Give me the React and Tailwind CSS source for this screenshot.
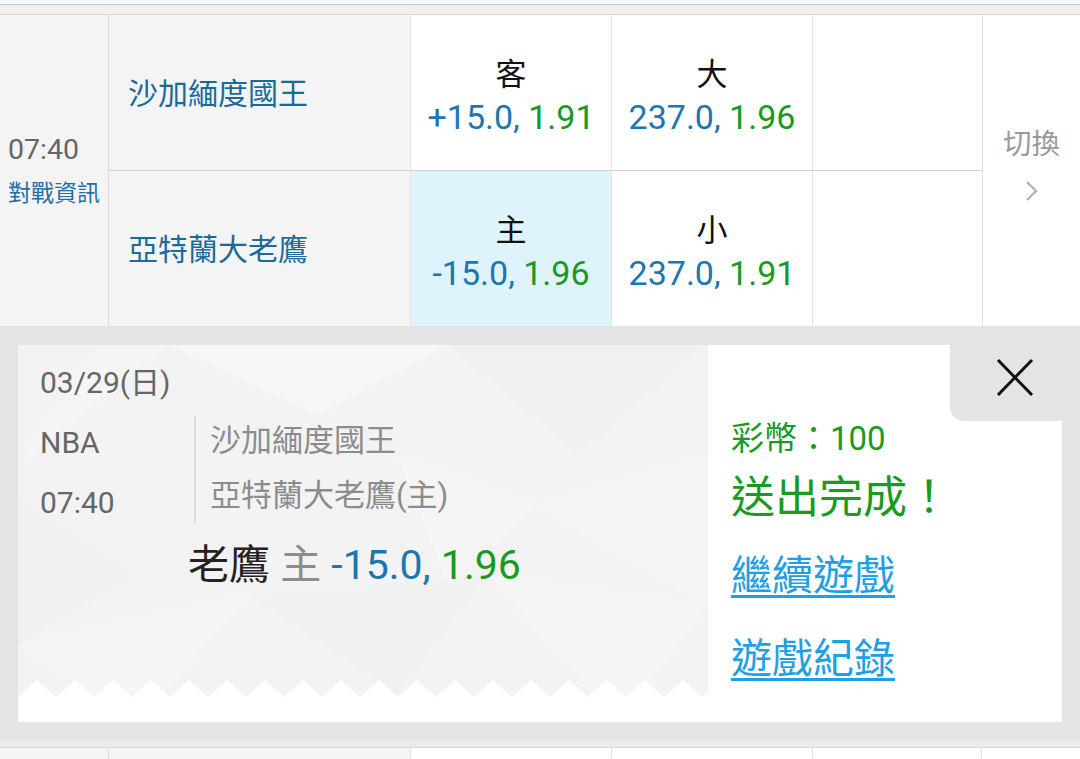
import React from "react";

const FONT = "font-['Roboto','Noto_Sans_CJK_TC',sans-serif]";

function Odds({ head, line, price, bg = "bg-white" }) {
  return (
    <div className={`w-[201px] shrink-0 ${bg} border-r border-[#dfe4e8] flex flex-col items-center justify-center pt-[6px]`}>
      <div className="text-[31px] leading-[43px] text-[#111]">{head}</div>
      <div className="text-[34px] leading-[43px] whitespace-nowrap">
        <span className="text-[#1b77b2]">{line}, </span>
        <span className="text-[#189a1e]">{price}</span>
      </div>
    </div>
  );
}

function Chevron() {
  return (
    <svg width="16" height="22" viewBox="0 0 16 22" fill="none">
      <path d="M3 2 L12 11 L3 20" stroke="#b0b0b0" strokeWidth="2.2" />
    </svg>
  );
}

function TicketBg() {
  let d = "M0,377 L0,352";
  for (let x = 0; x < 700; x += 38) {
    d += ` L${x + 19},335 L${x + 38},352`;
  }
  d += " L690,377 Z";
  return (
    <svg className="absolute inset-0" width="690" height="377" viewBox="0 0 690 377">
      <rect width="690" height="377" fill="#f3f3f3" />
      <polygon points="150,0 430,0 300,70" fill="#f6f6f6" />
      <polygon points="430,0 690,0 560,110" fill="#f1f1f1" />
      <polygon points="0,150 120,230 0,300" fill="#f1f1f1" />
      <polygon points="80,0 150,0 0,120" fill="#f5f5f5" />
      <polygon points="520,160 690,110 690,260" fill="#f5f5f5" />
      <polygon points="230,250 470,230 380,350" fill="#f1f1f1" />
      <polygon points="470,230 690,260 600,377" fill="#f5f5f5" />
      <polygon points="0,300 230,250 120,377" fill="#f5f5f5" />
      <polygon points="380,110 520,160 430,240" fill="#f5f5f5" />
      <path d={d} fill="#ffffff" />
    </svg>
  );
}

export default function App() {
  return (
    <div className={`w-[1080px] h-[759px] overflow-hidden bg-white ${FONT}`}>
      {/* top strip */}
      <div className="h-[4px] bg-[#f7f8f9]" />
      <div className="h-px bg-[#bccad6]" />
      <div className="h-[9px] bg-[#f2efec]" />
      <div className="h-px bg-[#cfd9e2]" />

      {/* match row */}
      <div className="flex h-[311px]">
        <div className="w-[109px] shrink-0 bg-[#f4f4f4] border-r border-[#dcdcdc] flex flex-col pt-[115px] pl-[8px]">
          <div className="text-[28.5px] leading-[40px] text-[#666]">07:40</div>
          <div className="text-[23px] leading-[48px] text-[#1f6fa5] whitespace-nowrap">對戰資訊</div>
        </div>
        <div className="w-[873px] shrink-0 flex flex-col">
          <div className="flex h-[156px] border-b border-[#c9d3db]">
            <div className="w-[302px] shrink-0 bg-[#f4f4f4] border-r border-[#dfe4e8] flex items-center pl-[19px] pt-[2px]">
              <span className="text-[30px] text-[#1b6a9a]">沙加緬度國王</span>
            </div>
            <Odds head="客" line="+15.0" price="1.91" />
            <Odds head="大" line="237.0" price="1.96" />
            <div className="flex-1 bg-white" />
          </div>
          <div className="flex h-[155px]">
            <div className="w-[302px] shrink-0 bg-[#f4f4f4] border-r border-[#dfe4e8] flex items-center pl-[19px] pt-[2px]">
              <span className="text-[30px] text-[#1b6a9a]">亞特蘭大老鷹</span>
            </div>
            <Odds head="主" line="-15.0" price="1.96" bg="bg-[#dff3fc]" />
            <Odds head="小" line="237.0" price="1.91" />
            <div className="flex-1 bg-white" />
          </div>
        </div>
        <div className="flex-1 bg-white border-l border-[#dfe4e8] flex flex-col items-center pt-[110px]">
          <div className="text-[28.5px] leading-[40px] text-[#9a9a9a]">切換</div>
          <div className="mt-[15px]">
            <Chevron />
          </div>
        </div>
      </div>

      {/* expanded bet panel */}
      <div className="h-[414px] bg-[#e4e4e4] px-[18px] pt-[19px]">
        <div className="flex h-[377px]">
          {/* ticket */}
          <div className="relative w-[690px] shrink-0 overflow-hidden">
            <TicketBg />
            <div className="relative flex flex-col pt-[18px]">
              <div className="pl-[22px] text-[30px] leading-[40px] text-[#666]">03/29(日)</div>
              <div className="flex items-start mt-[13px] pl-[22px]">
                <div className="w-[154px] shrink-0 flex flex-col text-[30px] text-[#666]">
                  <div className="leading-[54px]">NBA</div>
                  <div className="leading-[54px] mt-[6px]">07:40</div>
                </div>
                <div className="border-l-2 border-[#dcdcdc] pl-[14px] pb-[2px] flex flex-col text-[31px] text-[#8c8c8c] whitespace-nowrap">
                  <div className="leading-[50px]">沙加緬度國王</div>
                  <div className="leading-[50px] mt-[5px]">亞特蘭大老鷹(主)</div>
                </div>
              </div>
              <div className="pl-[170px] mt-[10px] text-[41px] leading-[50px] whitespace-nowrap">
                <span className="text-[#222]">老鷹</span>
                <span className="text-[#8c8c8c]"> 主 </span>
                <span className="text-[#1b77b2]">-15.0, </span>
                <span className="text-[#189a1e]">1.96</span>
              </div>
            </div>
          </div>

          {/* result */}
          <div className="flex-1 bg-white flex flex-col">
            <div className="h-[76px] flex justify-end">
              <div className="w-[112px] h-full bg-[#e4e4e4] rounded-bl-[14px] pl-[46px] pt-[13px]">
                <svg width="38" height="39" viewBox="0 0 38 39" fill="none">
                  <path d="M2 2 L36 37 M36 2 L2 37" stroke="#111" strokeWidth="3" />
                </svg>
              </div>
            </div>
            <div className="pl-[23px] flex flex-col">
              <div className="text-[33px] leading-[36px] text-[#1a9a1f] whitespace-nowrap">彩幣：100</div>
              <div className="mt-[15px] text-[44px] leading-[52px] text-[#1a9a1f] whitespace-nowrap">送出完成！</div>
              <a className="mt-[26px] text-[41px] leading-[52px] text-[#1fa0e4] underline decoration-[3px] underline-offset-[5px] w-fit">繼續遊戲</a>
              <a className="mt-[31px] text-[41px] leading-[52px] text-[#1fa0e4] underline decoration-[3px] underline-offset-[5px] w-fit">遊戲紀錄</a>
            </div>
          </div>
        </div>
      </div>
      <div className="h-[7px] bg-[#ebebeb]" />
      <div className="h-px bg-[#d3d9de]" />

      {/* next row (partial) */}
      <div className="flex h-[20px]">
        <div className="w-[109px] shrink-0 bg-[#f4f4f4] border-r border-[#dcdcdc]" />
        <div className="w-[302px] shrink-0 bg-[#f4f4f4] border-r border-[#dfe4e8]" />
        <div className="w-[201px] shrink-0 bg-white border-r border-[#dfe4e8]" />
        <div className="w-[201px] shrink-0 bg-white border-r border-[#dfe4e8]" />
        <div className="w-[169px] shrink-0 bg-white border-r border-[#dfe4e8]" />
        <div className="flex-1 bg-white" />
      </div>
    </div>
  );
}
